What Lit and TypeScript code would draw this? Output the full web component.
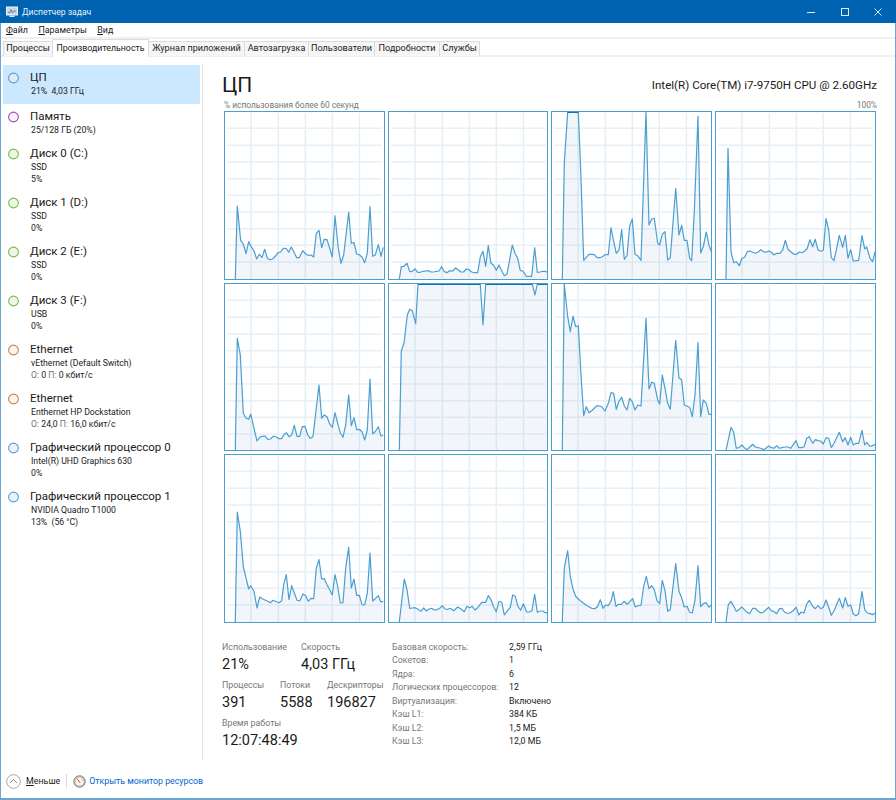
import { LitElement, html, css, svg } from "lit";
import { customElement } from "lit/decorators.js";

const FONT_W = 160.67, FONT_H = 168.67;
type Chart = { l: number; t: number; p: number[] };
const L = [27, 517, 4, 497];
const T = [48, 24, 13];
const raw: number[][] = [
[61,553,67,333,77,437,85,447,93,476,101,440,109,455,117,468,125,492,133,478,141,488,149,463,157,490,165,494,173,492,181,484,189,473,197,471,205,460,213,460,221,472,229,456,237,472,245,488,253,488,263,467,272,477,280,481,288,480,296,486,304,415,312,406,320,458,328,433,336,434,344,460,352,486,360,362,370,460,378,505,386,480,401,352,409,445,417,443,425,477,433,479,441,486,449,503,457,475,465,335,473,484,481,480,490,449,498,484,505,457],
[551,553,557,515,565,514,574,505,582,530,590,529,598,522,606,532,614,532,622,529,630,528,638,527,646,531,654,531,662,529,670,528,678,515,686,530,694,533,702,527,710,529,720,519,728,525,736,531,744,531,752,522,760,524,768,531,776,533,786,533,794,486,802,469,810,514,818,452,826,505,834,511,842,526,850,510,858,527,866,542,874,538,890,450,898,475,906,490,914,527,922,528,932,544,948,544,957,458,965,532,973,531,981,529,989,529,997,533],
[38,553,44,205,54,51,86,51,94,250,102,496,110,487,118,478,126,478,134,479,142,488,150,488,158,485,166,479,176,479,184,398,192,440,200,475,208,465,216,404,224,493,232,482,240,393,248,372,256,478,264,482,274,496,289,50,298,390,306,372,314,370,324,445,330,450,338,418,346,410,354,495,362,488,378,280,388,420,396,391,404,436,412,436,420,490,426,497,434,350,445,64,453,474,461,455,470,411,478,450,485,470],
[530,553,536,160,545,470,553,503,561,500,570,512,578,490,586,487,594,470,602,468,610,472,618,475,626,472,634,464,642,470,650,472,658,468,666,472,674,480,682,475,692,475,700,465,708,436,716,463,724,470,734,478,742,478,750,471,758,473,766,468,774,460,782,434,790,455,798,433,806,465,814,469,822,466,830,371,838,405,846,488,854,497,862,460,870,421,880,457,888,421,896,490,904,464,912,498,928,496,938,422,946,462,952,456,962,490,970,500,977,470],
[61,526,67,190,76,240,85,415,93,430,101,433,107,417,117,460,126,498,134,487,142,484,150,483,158,493,166,492,176,483,184,486,192,491,200,491,206,480,214,473,222,485,230,480,238,451,246,484,254,484,262,455,270,454,278,480,286,490,294,485,312,330,320,430,328,420,336,425,344,447,352,457,360,413,368,445,376,473,384,487,392,450,401,360,409,452,417,428,425,464,433,463,441,470,449,495,457,465,465,312,473,476,481,470,490,455,498,483,505,480],
[551,526,557,228,565,205,575,120,582,103,590,107,600,146,607,27,794,27,802,150,810,27,950,27,958,60,965,27,997,27],
[38,526,44,28,54,125,62,170,70,123,78,155,86,152,94,300,102,422,110,395,118,413,126,407,134,400,142,392,150,393,158,397,166,408,176,385,184,353,192,355,200,403,208,378,216,367,224,393,232,405,240,370,248,380,256,405,264,390,274,393,289,130,298,342,306,322,314,325,324,375,330,387,338,300,346,340,354,385,362,403,378,196,388,308,396,314,404,391,412,393,420,397,428,425,436,360,445,203,453,425,461,375,470,385,478,418,485,418],
[530,526,545,457,553,472,561,520,569,518,577,510,585,518,593,524,610,508,618,516,626,518,634,520,644,524,658,513,666,518,674,520,682,512,690,520,698,518,706,516,716,516,724,520,740,497,748,518,756,518,764,516,772,490,780,485,790,505,798,494,806,497,814,498,822,507,830,488,838,490,846,518,854,505,870,472,880,500,888,488,896,510,904,487,912,510,920,505,928,505,938,466,946,510,952,502,962,514,970,512,977,508],
[61,517,67,187,76,245,85,350,93,385,101,418,107,408,117,425,126,475,134,442,142,447,150,451,158,455,166,459,174,452,184,456,192,459,200,453,206,405,214,375,222,450,230,408,238,430,246,452,254,454,264,433,272,438,280,455,288,446,296,447,304,355,312,330,320,388,328,387,336,405,344,420,352,436,360,375,368,410,376,460,384,459,392,355,401,293,409,415,417,388,425,437,433,437,441,465,449,466,457,432,465,310,473,454,481,447,490,438,498,457,505,455],
[551,517,566,388,574,420,582,476,590,475,598,474,606,478,616,485,624,475,632,484,640,478,648,476,656,481,664,480,672,476,680,468,688,478,696,479,704,476,714,483,726,472,736,478,746,486,754,470,762,474,770,470,778,481,786,474,798,458,810,458,818,438,826,450,834,472,842,486,850,455,858,457,866,496,874,485,884,473,891,436,899,440,907,470,915,482,923,462,933,487,941,487,949,483,957,434,965,488,973,484,981,484,989,489,997,489],
[38,517,44,355,54,303,62,380,70,418,78,440,86,448,94,455,102,461,110,467,118,471,126,476,136,477,144,470,152,450,160,476,168,466,176,468,184,455,191,426,199,470,207,464,215,464,223,455,233,464,241,455,249,447,257,472,265,468,274,467,282,410,290,380,298,417,306,408,314,420,322,453,330,462,338,392,346,423,354,485,362,480,378,342,388,425,396,445,404,472,412,470,420,488,428,490,436,452,445,348,453,471,461,462,470,459,478,473,485,466],
[530,517,537,465,545,455,553,470,561,485,569,480,577,472,585,480,593,488,601,492,610,476,618,476,626,484,634,490,642,488,650,480,658,473,666,483,674,486,682,492,690,477,698,476,706,488,714,491,722,490,730,484,741,473,748,496,756,487,764,490,772,463,780,452,790,470,798,477,806,468,814,477,822,473,830,451,838,473,846,497,854,484,870,446,880,475,888,444,896,470,904,466,912,493,920,498,928,492,938,426,946,480,954,490,962,492,970,495,977,490],
];
const charts: Chart[] = raw.map((p, i) => ({ l: L[i % 4], t: T[Math.floor(i / 4)], p }));

const VX = [26, 53.3, 80.3, 107.3, 134.5];
const HY = [16.3, 33.2, 50, 66.8, 83.3, 100, 116.8, 133.2, 150];

function chartSvg(c: Chart) {
  const xy: [number, number][] = [];
  for (let i = 0; i < c.p.length; i += 2) {
    xy.push([+((c.p[i] - c.l) / 3 - 1).toFixed(1), +((c.p[i + 1] - c.t) / 3 - 1).toFixed(1)]);
  }
  const pts = xy.map((q) => q.join(","));
  const first = xy[0][0];
  const last = xy[xy.length - 1][0];
  const area = `${pts.join(" ")} ${last},168 ${first},168`;
  const tops = xy.slice(1).map((q, i) => [xy[i], q]).filter(([a, b]) => a[1] <= 0.5 && b[1] <= 0.5);
  return html`<svg class="plot" viewBox="0 0 158.67 166.67" preserveAspectRatio="none">
    ${VX.map((x) => svg`<line x1=${x} x2=${x} y1="1" y2="166.67" stroke="#e3eef6" stroke-width="1.4"></line>`)}
    ${HY.map((y) => svg`<line x1="2" x2="157" y1=${y} y2=${y} stroke="#e6f0f7" stroke-width="1.4"></line>`)}
    <polygon points=${area} fill="#5a8fc0" fill-opacity="0.08"></polygon>
    <polyline points=${pts.join(" ")} fill="none" stroke="#4a9fd0" stroke-width="1.2" stroke-linejoin="round"></polyline>
    ${tops.map(([a, b]) => svg`<line x1=${a[0]} x2=${b[0]} y1="0.4" y2="0.4" stroke="#0f74b4" stroke-width="1.2"></line>`)}
  </svg>`;
}

const items = [
  { t: "ЦП", l: ["21%  4,03 ГГц"], k: "cpu", sel: true },
  { t: "Память", l: ["25/128 ГБ (20%)"], k: "mem" },
  { t: "Диск 0 (C:)", l: ["SSD", "5%"], k: "disk" },
  { t: "Диск 1 (D:)", l: ["SSD", "0%"], k: "disk" },
  { t: "Диск 2 (E:)", l: ["SSD", "0%"], k: "disk" },
  { t: "Диск 3 (F:)", l: ["USB", "0%"], k: "disk" },
  { t: "Ethernet", l: ["vEthernet (Default Switch)"], net: ["0", "0 кбит/с"], k: "net" },
  { t: "Ethernet", l: ["Enthernet HP Dockstation"], net: ["24,0", "16,0 кбит/с"], k: "net" },
  { t: "Графический процессор 0", l: ["Intel(R) UHD Graphics 630", "0%"], k: "gpu" },
  { t: "Графический процессор 1", l: ["NVIDIA Quadro T1000", "13%  (56 °C)"], k: "gpu" },
];

const tabs = ["Процессы", "Производительность", "Журнал приложений", "Автозагрузка", "Пользователи", "Подробности", "Службы"];

const specs = [
  ["Базовая скорость:", "2,59 ГГц"],
  ["Сокетов:", "1"],
  ["Ядра:", "6"],
  ["Логических процессоров:", "12"],
  ["Виртуализация:", "Включено"],
  ["Кэш L1:", "384 КБ"],
  ["Кэш L2:", "1,5 МБ"],
  ["Кэш L3:", "12,0 МБ"],
];

@customElement("app-root")
export class AppRoot extends LitElement {
  static styles = css`
    :host { display: block; width: 896px; height: 800px; font-family: Roboto, "Noto Sans", sans-serif; color: #1a1a1a; background: #fff; overflow: hidden; }
    * { box-sizing: border-box; }
    .title { height: 23px; background: #0063b1; color: #e8f1f9; display: flex; align-items: center; font-size: 8.6px; padding-left: 6px; }
    .title .app { width: 12px; height: 12px; margin-right: 4px; flex: none; }
    .title .name { flex: 1; }
    .ctl { width: 33.5px; height: 23px; display: flex; align-items: center; justify-content: center; }
    .ctls { display: flex; padding-right: 1px; }
    .body { height: 777px; border: solid #6ba6d6; border-width: 0 1px 2px 1px; display: flex; flex-direction: column; }
    .menu { height: 14px; display: flex; align-items: center; font-size: 8.9px; padding-left: 5px; gap: 10.5px; }
    .band { height: 2px; background: #f1f1f1; }
    .tabs { height: 16px; display: grid; grid-template-columns: 50px 96px 96px 64px 66px 65px 40px; padding-left: 2px; justify-content: start; background: #fff; align-items: end; }
    .tab { height: 15px; margin-bottom: -1px; position: relative; font-size: 9.1px; line-height: 13px; text-align: center; background: #f6f6f6; border: 1px solid #dcdcdc; border-bottom: 0; border-left-width: 0; white-space: nowrap; color: #222; }
    .tab:first-child { border-left-width: 1px; }
    .tab.on { background: #fff; height: 18px; margin-bottom: -2px; font-size: 8.8px; line-height: 16px; z-index: 1; border-left-width: 1px; margin-left: -1px; }
    .main { height: 703px; display: flex; padding-top: 8px; }
    .side { width: 202px; border-right: 1px solid #e4e4e4; padding-left: 2px; padding-right: 1px; flex: none; }
    .item { display: flex; height: 49px; padding-top: 4px; }
    .item.two { height: 38.5px; padding-top: 5px; }
    .item.sel { background: #cce8ff; margin-right: 1px; }
    .dot { width: 27px; flex: none; padding: 2px 0 0 5px; }
    .dot svg { display: block; }
    .it { font-size: 11.5px; line-height: 15px; white-space: nowrap; }
    .il { font-size: 8.7px; line-height: 12px; white-space: pre; color: #222; padding-left: 1px; }
    .il .g { color: #777; }
    .panel { flex: 1; padding-left: 19px; display: flex; flex-direction: column; }
    .head { height: 35px; padding-top: 5px; display: flex; align-items: center; justify-content: space-between; width: 655px; }
    .big { font-size: 21px; line-height: 30px; }
    .cpu { font-size: 11.6px; }
    .cap { height: 11px; width: 655px; padding-left: 2px; display: flex; justify-content: space-between; font-size: 8.4px; line-height: 11px; color: #777; }
    .charts { display: grid; grid-template-columns: repeat(4, ${FONT_W}px); grid-template-rows: repeat(3, ${FONT_H}px); gap: 3px; margin-left: 2px; }
    .chart { border: 1px solid #4f9fcd; background: #fff; overflow: hidden; }
    .plot { display: block; width: 100%; height: 100%; }
    .stats { display: flex; margin-top: 17px; }
    .left { width: 170px; }
    .row { display: flex; height: 38px; }
    .b .sl { font-size: 8.8px; line-height: 14px; color: #777; white-space: nowrap; }
    .b .sv { font-size: 14.5px; line-height: 22px; white-space: nowrap; }
    .w79 { width: 79px; } .w58 { width: 58px; } .w47 { width: 47px; }
    .specs { display: grid; grid-template-columns: 117px auto; grid-auto-rows: 13.43px; font-size: 8.8px; line-height: 13.43px; padding-top: 1px; }
    .specs .k { color: #777; white-space: nowrap; }
    .specs .v { color: #222; white-space: nowrap; }
    .foot { flex: 1; display: flex; align-items: center; padding-left: 5px; font-size: 8.9px; padding-top: 4px; }
    .foot .less { margin-left: 5px; }
    .sep { width: 1px; height: 14px; background: #dcdcdc; margin: 0 6px 0 6px; }
    .link { color: #0066cc; margin-left: 3px; white-space: nowrap; font-size: 8.8px; }
    u { text-underline-offset: 1px; }
  `;

  private dot(k: string) {
    const c: Record<string, [string, string]> = {
      cpu: ["#5a9fd4", "#dcecf8"],
      mem: ["#a94ac4", "#fbf4fd"],
      disk: ["#7cba4f", "#eef7e6"],
      net: ["#c98348", "#fcf5ee"],
      gpu: ["#5a9fd4", "#eaf3fb"],
    };
    const [s, f] = c[k];
    return html`<svg width="12" height="12" viewBox="0 0 12 12"><circle cx="5.5" cy="6" r="4.9" fill=${f} stroke=${s} stroke-width="1.1"></circle></svg>`;
  }

  render() {
    return html`
      <div class="title">
        <svg class="app" viewBox="0 0 12 12">
          <rect x="0.5" y="1" width="11" height="8" fill="#c8d6e2" stroke="#eef3f7" stroke-width="1"></rect>
          <path d="M2 6.5 L4 6.5 L5 3.5 L6.5 7 L7.5 5 L10 5" fill="none" stroke="#5f7f99" stroke-width="0.9"></path>
          <rect x="3.5" y="9.5" width="5" height="1.5" fill="#dfe7ee"></rect>
        </svg>
        <span class="name">Диспетчер задач</span>
        <div class="ctls">
          <div class="ctl"><svg width="10" height="10" viewBox="0 0 10 10"><path d="M1 5.5 H9" stroke="#dfeaf4" stroke-width="1"></path></svg></div>
          <div class="ctl"><svg width="10" height="10" viewBox="0 0 10 10"><rect x="1.5" y="1.5" width="7" height="7" fill="none" stroke="#dfeaf4" stroke-width="1"></rect></svg></div>
          <div class="ctl"><svg width="10" height="10" viewBox="0 0 10 10"><path d="M1.5 1.5 L8.5 8.5 M8.5 1.5 L1.5 8.5" stroke="#dfeaf4" stroke-width="1"></path></svg></div>
        </div>
      </div>
      <div class="body">
        <div class="menu"><span><u>Ф</u>айл</span><span><u>П</u>араметры</span><span><u>В</u>ид</span></div>
        <div class="band"></div>
        <div class="tabs">${tabs.map((t, i) => html`<div class="tab ${i === 1 ? "on" : ""}">${t}</div>`)}</div>
        <div class="band"></div>
        <div class="main">
          <div class="side">
            ${items.map(
              (it) => html`<div class="item ${it.sel ? "sel" : ""} ${it.l.length === 1 && !it.net ? "two" : ""}">
                <div class="dot">${this.dot(it.k)}</div>
                <div>
                  <div class="it">${it.t}</div>
                  ${it.l.map((x) => html`<div class="il">${x}</div>`)}
                  ${it.net ? html`<div class="il"><span class="g">О:</span> ${it.net[0]} <span class="g">П:</span> ${it.net[1]}</div>` : ""}
                </div>
              </div>`
            )}
          </div>
          <div class="panel">
            <div class="head"><div class="big">ЦП</div><div class="cpu">Intel(R) Core(TM) i7-9750H CPU @ 2.60GHz</div></div>
            <div class="cap"><span>% использования более 60 секунд</span><span>100%</span></div>
            <div class="charts">${charts.map((c) => html`<div class="chart">${chartSvg(c)}</div>`)}</div>
            <div class="stats">
              <div class="left">
                <div class="row">
                  <div class="b w79"><div class="sl">Использование</div><div class="sv">21%</div></div>
                  <div class="b"><div class="sl">Скорость</div><div class="sv">4,03 ГГц</div></div>
                </div>
                <div class="row">
                  <div class="b w58"><div class="sl">Процессы</div><div class="sv">391</div></div>
                  <div class="b w47"><div class="sl">Потоки</div><div class="sv">5588</div></div>
                  <div class="b"><div class="sl">Дескрипторы</div><div class="sv">196827</div></div>
                </div>
                <div class="row">
                  <div class="b"><div class="sl">Время работы</div><div class="sv">12:07:48:49</div></div>
                </div>
              </div>
              <div class="specs">${specs.map((s) => html`<div class="k">${s[0]}</div><div class="v">${s[1]}</div>`)}</div>
            </div>
          </div>
        </div>
        <div class="foot">
          <svg width="15" height="15" viewBox="0 0 15 15"><circle cx="7.5" cy="7.5" r="6.8" fill="#fff" stroke="#a8a8a8" stroke-width="1"></circle><path d="M4 9 L7.5 5.5 L11 9" fill="none" stroke="#8c8c8c" stroke-width="1"></path></svg>
          <span class="less"><u>М</u>еньше</span>
          <span class="sep"></span>
          <svg width="13" height="13" viewBox="0 0 13 13"><circle cx="6.5" cy="6.5" r="5.8" fill="#bdb9b3" stroke="#8d8d8d" stroke-width="1"></circle><circle cx="6.5" cy="6.5" r="4" fill="#fbf8f4"></circle><path d="M4 3.5 L7.2 7.8" stroke="#c8402f" stroke-width="1"></path><path d="M8.6 4.2 L9.6 5.4" stroke="#8a8a8a" stroke-width="0.7"></path></svg>
          <span class="link">Открыть монитор ресурсов</span>
        </div>
      </div>
    `;
  }
}
